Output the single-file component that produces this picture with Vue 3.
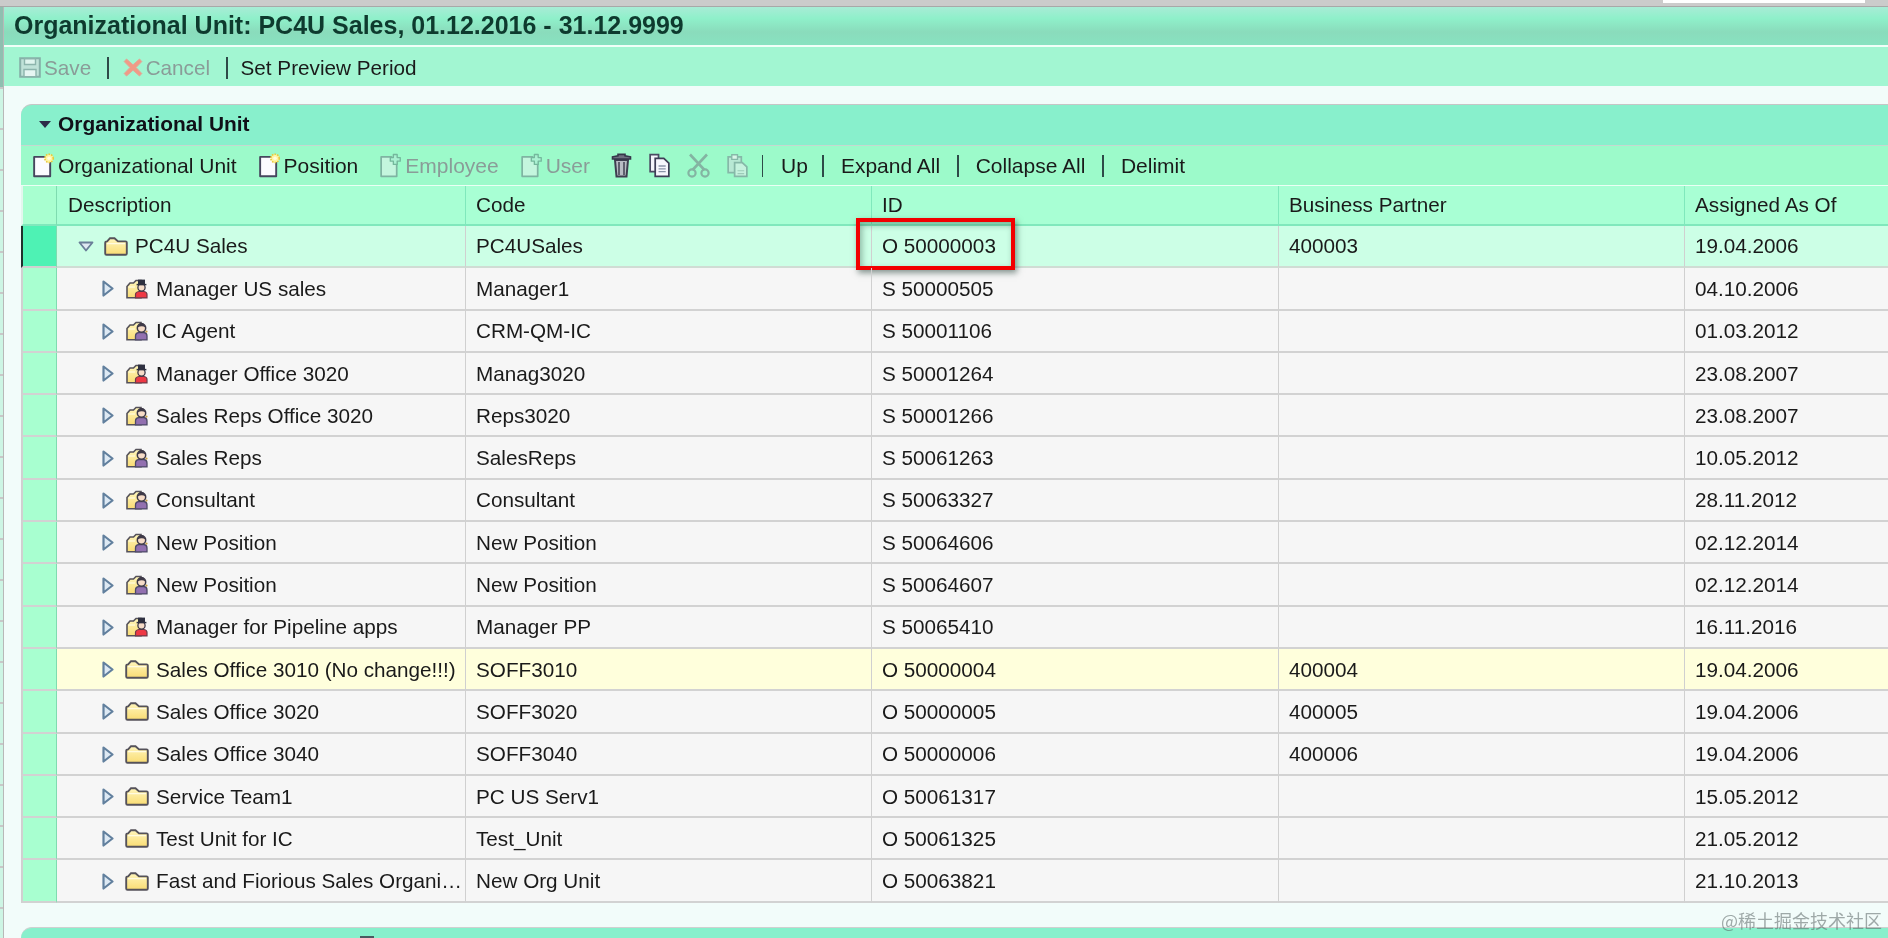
<script setup>
const rows = [
  { name: 'PC4U Sales', code: 'PC4USales', id: 'O 50000003', bp: '400003', date: '19.04.2006', icon: 'folder', root: true },
  { name: 'Manager US sales', code: 'Manager1', id: 'S 50000505', bp: '', date: '04.10.2006', icon: 'mgr' },
  { name: 'IC Agent', code: 'CRM-QM-IC', id: 'S 50001106', bp: '', date: '01.03.2012', icon: 'pos' },
  { name: 'Manager Office 3020', code: 'Manag3020', id: 'S 50001264', bp: '', date: '23.08.2007', icon: 'mgr' },
  { name: 'Sales Reps Office 3020', code: 'Reps3020', id: 'S 50001266', bp: '', date: '23.08.2007', icon: 'pos' },
  { name: 'Sales Reps', code: 'SalesReps', id: 'S 50061263', bp: '', date: '10.05.2012', icon: 'pos' },
  { name: 'Consultant', code: 'Consultant', id: 'S 50063327', bp: '', date: '28.11.2012', icon: 'pos' },
  { name: 'New Position', code: 'New Position', id: 'S 50064606', bp: '', date: '02.12.2014', icon: 'pos' },
  { name: 'New Position', code: 'New Position', id: 'S 50064607', bp: '', date: '02.12.2014', icon: 'pos' },
  { name: 'Manager for Pipeline apps', code: 'Manager PP', id: 'S 50065410', bp: '', date: '16.11.2016', icon: 'mgr' },
  { name: 'Sales Office 3010 (No change!!!)', code: 'SOFF3010', id: 'O 50000004', bp: '400004', date: '19.04.2006', icon: 'folder', warn: true },
  { name: 'Sales Office 3020', code: 'SOFF3020', id: 'O 50000005', bp: '400005', date: '19.04.2006', icon: 'folder' },
  { name: 'Sales Office 3040', code: 'SOFF3040', id: 'O 50000006', bp: '400006', date: '19.04.2006', icon: 'folder' },
  { name: 'Service Team1', code: 'PC US Serv1', id: 'O 50061317', bp: '', date: '15.05.2012', icon: 'folder' },
  { name: 'Test Unit for IC', code: 'Test_Unit', id: 'O 50061325', bp: '', date: '21.05.2012', icon: 'folder' },
  { name: 'Fast and Fiorious Sales Organi…', code: 'New Org Unit', id: 'O 50063821', bp: '', date: '21.10.2013', icon: 'folder' }
]
</script>

<template>
  <div class="page">
    <svg class="defs" width="0" height="0" aria-hidden="true">
      <defs>
        <linearGradient id="fy" x1="0" y1="0" x2="0" y2="1">
          <stop offset="0" stop-color="#fff6bc" />
          <stop offset="1" stop-color="#f9dc74" />
        </linearGradient>
        <symbol id="i-folder" viewBox="0 0 24 19">
          <path d="M1.2 6V16.4Q1.2 17.8 2.5 17.8H21.5Q22.8 17.8 22.8 16.4V5.5Q22.8 4.4 21.5 4.4H14L10.5 1.2H6L3.2 4.4Q1.2 4.4 1.2 6Z" fill="url(#fy)" stroke="#55525a" stroke-width="1.9" />
          <path d="M3 6.6H21" stroke="#fffbe0" stroke-width="1.3" />
        </symbol>
        <symbol id="i-pos" viewBox="0 0 22 20">
          <path d="M1 7.5L4 4H7.5L10 1.5H15V18.8H1Z" fill="url(#fy)" stroke="#55525a" stroke-width="1.6" />
          <path d="M2.5 8H9" stroke="#fffbe0" stroke-width="1.2" />
          <path d="M9.5 18.9V15Q9.5 12 13 11.5H18Q21 12 21 15V18.9Z" fill="#9270b0" stroke="#4e4a68" stroke-width="1.3" />
          <circle cx="15.5" cy="7" r="4.2" fill="#f6dcc8" stroke="#3e3a48" stroke-width="1.5" />
          <path d="M11.6 6.5Q12.5 2 15.5 2T19.4 6.5Q16 4 11.6 6.5Z" fill="#3e3a48" />
          <circle cx="20.5" cy="10.6" r="1.1" fill="#c8a040" />
        </symbol>
        <symbol id="i-mgr" viewBox="0 0 22 20">
          <path d="M1 7.5L4 4H7.5L10 1.5H15V18.8H1Z" fill="url(#fy)" stroke="#55525a" stroke-width="1.6" />
          <path d="M2.5 8H9" stroke="#fffbe0" stroke-width="1.2" />
          <path d="M9.5 18.9V15.5Q9.5 13 13 12.5H18Q21 13 21 15.5V18.9Z" fill="#ee3844" stroke="#6e3a48" stroke-width="1.2" />
          <circle cx="15.5" cy="8.5" r="3.6" fill="#f6dcc8" stroke="#3e3a48" stroke-width="1.3" />
          <path d="M12 5.6H19V0.6H12Z" fill="#2e3040" />
          <path d="M10.6 5.6H20.4" stroke="#2e3040" stroke-width="1.5" />
        </symbol>
        <symbol id="i-right" viewBox="0 0 12 17">
          <path d="M1.5 1.5L10.5 8.5L1.5 15.5Z" fill="#dde9f4" stroke="#62809e" stroke-width="2.2" stroke-linejoin="round" />
        </symbol>
        <symbol id="i-down" viewBox="0 0 16 11">
          <path d="M1.5 1.5H14.5L8 9.5Z" fill="#dfe8f2" stroke="#6a7e98" stroke-width="1.8" stroke-linejoin="round" />
        </symbol>
        <symbol id="i-new" viewBox="0 0 22 25">
          <path d="M1.2 3.5H18V23.8H1.2Z" fill="#fbfbff" stroke="#46465e" stroke-width="2" stroke-linejoin="round" />
          <circle cx="16.8" cy="5" r="4.4" fill="#fff4a0" stroke="#e8c838" stroke-width="1.6" stroke-dasharray="1.6 1.2" />
          <circle cx="16.8" cy="5" r="1.8" fill="#fffde0" />
        </symbol>
        <symbol id="i-newoff" viewBox="0 0 22 25">
          <path d="M1.2 3.5H12L17.5 8V23.8H1.2Z" fill="#c4f6de" stroke="#7fb4a2" stroke-width="1.8" stroke-linejoin="round" />
          <path d="M14 1H18V4.2H21.2V8H18V11.4H14V8H10.8V4.2H14Z" fill="#aaf2d2" stroke="#74b89c" stroke-width="1.4" stroke-linejoin="round" />
        </symbol>
        <symbol id="i-save" viewBox="0 0 22 21">
          <path d="M1.2 1.2H20.8V19.8H1.2Z" fill="#bfe2d8" stroke="#86b0a8" stroke-width="2" />
          <path d="M5.5 1.8H16.5V7.5H5.5Z" fill="#dff4ee" stroke="#8cb4ac" stroke-width="1.4" />
          <path d="M5 12.5H17V19.6H5Z" fill="#e6f6f2" stroke="#8cb4ac" stroke-width="1.4" />
        </symbol>
        <symbol id="i-x" viewBox="0 0 20 21">
          <path d="M3.5 2L10 7.8L16.5 2L18.8 4.6L13 10.5L18.8 16.5L16.5 19L10 13.2L3.5 19L1.2 16.5L7 10.5L1.2 4.6Z" fill="#f09a86" stroke="#e0a898" stroke-width="1" />
        </symbol>
        <symbol id="i-trash" viewBox="0 0 21 25">
          <path d="M4 7L5.5 23.5H15.5L17 7Z" fill="#b8bcc4" stroke="#3e3e50" stroke-width="2" />
          <path d="M8 9V22M13 9V22" stroke="#5e606e" stroke-width="2" />
          <path d="M1.5 6V3.8L7 2.8V1.4H14V2.8L19.5 3.8V6Z" fill="#6e7080" stroke="#36364a" stroke-width="1.6" />
        </symbol>
        <symbol id="i-copy" viewBox="0 0 22 25">
          <path d="M1.2 1.2H10V19H1.2Z" fill="#f4f4fa" stroke="#4a4a62" stroke-width="1.8" />
          <path d="M6.5 5H15.5L20.8 10V23.8H6.5Z" fill="#f6f6fc" stroke="#3e3e56" stroke-width="1.8" />
          <path d="M10 13H17.5M10 16H17.5M10 19H17.5" stroke="#8a94a8" stroke-width="1.4" />
        </symbol>
        <symbol id="i-cut" viewBox="0 0 23 25">
          <path d="M3 1.5L17.5 17M20 1.5L5.5 17" fill="none" stroke="#84b4a2" stroke-width="2.6" />
          <circle cx="5" cy="20" r="3.6" fill="none" stroke="#84b4a2" stroke-width="2.2" />
          <circle cx="18" cy="20" r="3.6" fill="none" stroke="#84b4a2" stroke-width="2.2" />
        </symbol>
        <symbol id="i-paste" viewBox="0 0 22 25">
          <path d="M1.2 3.5H15V20H1.2Z" fill="#b8e8d4" stroke="#86b8a8" stroke-width="1.8" />
          <path d="M5 1.2H11V6H5Z" fill="#d8f6e8" stroke="#86b8a8" stroke-width="1.4" />
          <path d="M8 9.5H16L20.8 14V23.8H8Z" fill="#c6f2de" stroke="#86b8a8" stroke-width="1.8" />
          <path d="M11 18H18M11 21H18" stroke="#9ccbb8" stroke-width="1.2" />
        </symbol>
      </defs>
    </svg>

    <div class="topband"><div class="topbox"></div></div>

    <div class="body">
      <div class="strip"></div>
      <main class="main">
        <header class="titlebar">Organizational Unit: PC4U Sales, 01.12.2016 - 31.12.9999</header>

        <div class="actions">
          <span class="tool off save"><svg class="ic22"><use href="#i-save" /></svg>Save</span>
          <i class="sep"></i>
          <span class="tool off cancel"><svg class="ic20"><use href="#i-x" /></svg>Cancel</span>
          <i class="sep"></i>
          <span class="tool">Set Preview Period</span>
        </div>

        <section class="panel">
          <div class="panelhead">
            <i class="caret"></i>
            <span>Organizational Unit</span>
          </div>

          <div class="treebar">
            <div class="group adds">
              <span class="tool"><svg class="doc"><use href="#i-new" /></svg>Organizational Unit</span>
              <span class="tool"><svg class="doc"><use href="#i-new" /></svg>Position</span>
              <span class="tool off"><svg class="doc"><use href="#i-newoff" /></svg>Employee</span>
              <span class="tool off"><svg class="doc"><use href="#i-newoff" /></svg>User</span>
            </div>
            <div class="group edits">
              <svg class="doc"><use href="#i-trash" /></svg>
              <svg class="doc"><use href="#i-copy" /></svg>
              <svg class="doc wide"><use href="#i-cut" /></svg>
              <svg class="doc"><use href="#i-paste" /></svg>
            </div>
            <div class="group texts">
              <i class="sep"></i>
              <span class="tool up">Up</span>
              <i class="sep"></i>
              <span class="tool">Expand All</span>
              <i class="sep"></i>
              <span class="tool">Collapse All</span>
              <i class="sep"></i>
              <span class="tool">Delimit</span>
            </div>
          </div>

          <div class="table">
            <div class="row head">
              <div class="sel"></div>
              <div class="cell">Description</div>
              <div class="cell">Code</div>
              <div class="cell">ID</div>
              <div class="cell">Business Partner</div>
              <div class="cell">Assigned As Of</div>
            </div>
            <div v-for="r in rows" :key="r.id" class="row" :class="{ selected: r.root, warn: r.warn }">
              <div class="sel"></div>
              <div class="cell tree" :class="{ rootcell: r.root }">
                <svg v-if="r.root" class="down"><use href="#i-down" /></svg>
                <svg v-else class="right"><use href="#i-right" /></svg>
                <svg v-if="r.icon === 'folder'" class="folder"><use href="#i-folder" /></svg>
                <svg v-else class="person"><use :href="'#i-' + r.icon" /></svg>
                <span class="label">{{ r.name }}</span>
              </div>
              <div class="cell">{{ r.code }}</div>
              <div class="cell idcell">
                {{ r.id }}
                <div v-if="r.root" class="callout"></div>
              </div>
              <div class="cell">{{ r.bp }}</div>
              <div class="cell">{{ r.date }}</div>
            </div>
          </div>
        </section>

        <section class="nextpanel"><i class="nub"></i></section>
      </main>
    </div>

    <div class="watermark">@稀土掘金技术社区</div>
  </div>
</template>

<style scoped>
.page {
  position: relative;
  width: 1888px;
  height: 938px;
  overflow: hidden;
  font-family: "Liberation Sans", Arial, sans-serif;
  font-size: 20.7px;
  color: #1a1a1a;
  background: #f2fcfa;
  display: flex;
  flex-direction: column;
  filter: blur(0.35px);
}
.defs { position: absolute; }
svg { display: block; flex: none; }
.topband {
  height: 7px;
  flex: none;
  background: #cbcbcb;
  border-bottom: 1px solid #a8a8a8;
  box-sizing: border-box;
  padding-left: 1663px;
}
.topbox { width: 202px; height: 3px; background: #fff; }
.body { flex: 1; display: flex; min-height: 0; }
.strip {
  width: 3px;
  flex: none;
  border-right: 1px solid #b8b8b8;
  background:
    linear-gradient(#8fbfb0 0 80px, transparent 80px),
    repeating-linear-gradient(#cdf5e4 0 39px, #c8c8c8 39px 41px);
}
.main { flex: 1; min-width: 0; display: flex; flex-direction: column; }
.titlebar {
  height: 40px;
  flex: none;
  box-sizing: border-box;
  padding: 0 0 2px 10px;
  display: flex;
  align-items: center;
  font-weight: bold;
  font-size: 25px;
  color: #0e3a2e;
  white-space: nowrap;
  background: linear-gradient(#a8ecd6 0, #8ff0ca 30%, #8adcbc 65%, #88e2c0 100%);
  border-bottom: 2px solid #f0fff8;
}
.actions {
  height: 39px;
  flex: none;
  box-sizing: border-box;
  display: flex;
  align-items: center;
  padding: 2px 0 0 15px;
  background: #a2f6d2;
}
.tool { display: inline-flex; align-items: center; white-space: nowrap; gap: 3px; }
.off { color: #8a9c98; }
.ic22 { width: 22px; height: 21px; }
.ic20 { width: 20px; height: 21px; }
.sep { display: block; width: 1.5px; height: 22px; background: #2e4a48; flex: none; }
.actions .sep { margin: 0 14px 0 16px; }
.actions .cancel + .sep { margin-right: 13px; }
.panel { margin: 18px 0 0 17px; flex: none; }
.panelhead {
  height: 42px;
  box-sizing: border-box;
  display: flex;
  align-items: center;
  padding: 0 0 2px 18px;
  gap: 7px;
  font-weight: bold;
  font-size: 20.9px;
  color: #101018;
  background: #88f0cc;
  border-top: 1.5px solid #c6c6c6;
  border-bottom: 1.5px solid #c6d8d0;
  border-top-left-radius: 11px;
}
.caret {
  width: 0;
  height: 0;
  border-left: 6.5px solid transparent;
  border-right: 6.5px solid transparent;
  border-top: 7px solid #2c2c48;
}
.treebar {
  height: 39px;
  box-sizing: border-box;
  display: flex;
  align-items: center;
  padding-left: 12px;
  font-size: 21px;
  background: #9cfaca;
}
.treebar .tool { gap: 4px; }
.group { display: flex; align-items: center; }
.adds { gap: 22px; }
.edits { gap: 17px; margin-left: 21px; }
.texts { gap: 17px; margin-left: 13.5px; }
.up { margin: 0 -2.5px 0 1px; }
.doc { width: 21px; height: 25px; }
.doc.wide { width: 23px; }
.table { border-top: 1px solid #eafff4; }
.row {
  display: grid;
  grid-template-columns: 36px 408px 406px 407px 406px 1fr;
  height: 42.3px;
  background: #f6f6f6;
}
.row.head { height: 40px; background: #a8ffd4; }
.row.selected { background: #ccffe6; }
.row.warn { background: #ffffdc; }
.cell {
  box-sizing: border-box;
  padding: 1px 0 0 10px;
  display: flex;
  align-items: center;
  min-width: 0;
  border-left: 1.5px solid #d0d0d0;
  border-bottom: 2px solid #d2d2d2;
  white-space: nowrap;
}
.row .cell:nth-child(2) { border-left: none; padding-left: 11px; }
.row.head .cell { padding-top: 0; }
.head .cell { border-left-color: #80e8bc; border-bottom-color: #80e8bc; }
.selected .cell { border-bottom-color: #d0dcd4; padding-top: 0; }
.sel {
  box-sizing: border-box;
  background: #a8ffd0;
  border-left: 2px solid #d0d0d0;
  border-right: 1.5px solid #7fdcb0;
  border-bottom: 2px solid #d2d2d2;
}
.head .sel { border-left-color: #e4f6ee; border-bottom-color: #80e8bc; }
.selected .sel { background: #4ef2b4; border-left: 2px solid #20302c; border-bottom-color: #d0d0d0; }
.row .cell.tree { padding-left: 45px; padding-right: 0; }
.row .cell.tree.rootcell { padding-left: 21px; }
.right { width: 12px; height: 17px; margin-right: 12px; }
.down { width: 16px; height: 11px; margin-right: 10px; }
.folder { width: 24px; height: 19px; margin-right: 7px; }
.person { width: 22px; height: 20px; margin-right: 8px; }
.row:not(.selected) .folder { margin-left: -1px; }
.label { min-width: 0; }
.idcell { position: relative; }
.callout {
  position: absolute;
  left: -16px;
  top: -8px;
  width: 159px;
  height: 52px;
  box-sizing: border-box;
  border: 4px solid #f20000;
  box-shadow: 2px 3px 6px rgba(40, 70, 60, 0.55), inset 2px 3px 6px rgba(40, 70, 60, 0.4);
}
.nextpanel {
  position: relative;
  margin: 24px 0 0 17px;
  flex: 1;
  background: #88f0cc;
  border-top: 1.5px solid #d0d0d0;
  border-top-left-radius: 11px;
}
.nub {
  position: absolute;
  left: 339px;
  bottom: 0;
  width: 14px;
  height: 2px;
  background: #4a5a60;
}
.watermark {
  position: absolute;
  right: 6px;
  bottom: 7px;
  font-family: "Noto Sans CJK SC", "Liberation Sans", sans-serif;
  font-size: 18px;
  line-height: 22px;
  color: rgba(90, 100, 100, 0.55);
}
</style>
